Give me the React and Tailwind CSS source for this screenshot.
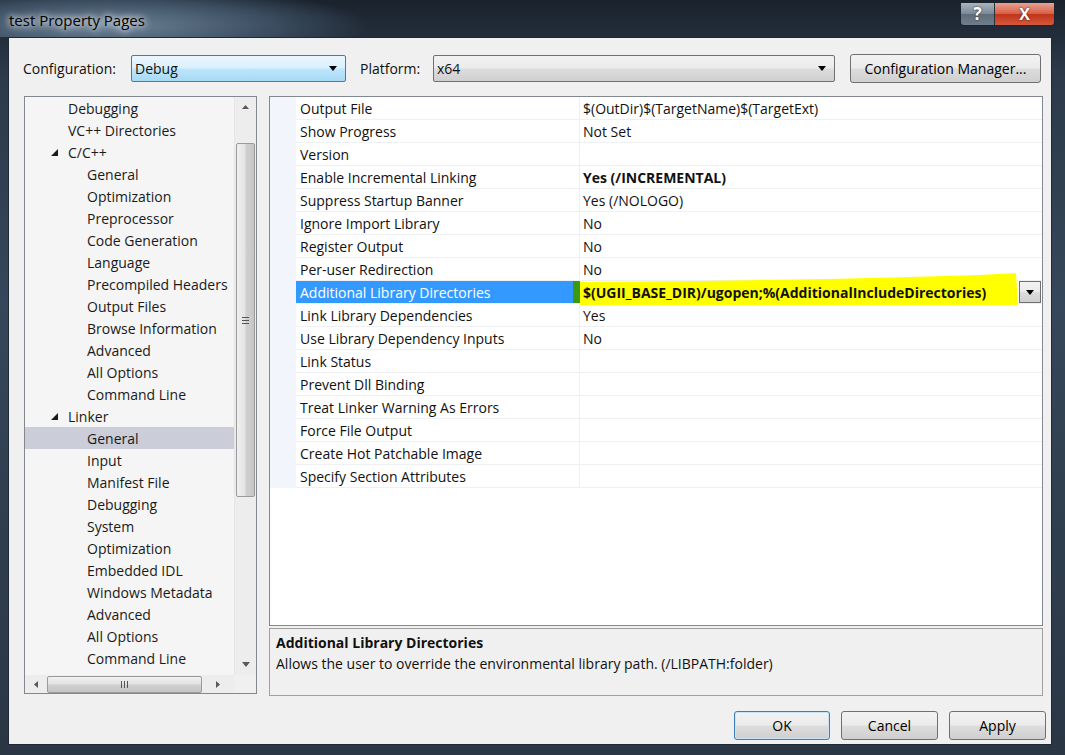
import React from 'react';

const treeItems = [
  { label: 'Debugging', level: 1 },
  { label: 'VC++ Directories', level: 1 },
  { label: 'C/C++', level: 1, open: true },
  { label: 'General', level: 2 },
  { label: 'Optimization', level: 2 },
  { label: 'Preprocessor', level: 2 },
  { label: 'Code Generation', level: 2 },
  { label: 'Language', level: 2 },
  { label: 'Precompiled Headers', level: 2 },
  { label: 'Output Files', level: 2 },
  { label: 'Browse Information', level: 2 },
  { label: 'Advanced', level: 2 },
  { label: 'All Options', level: 2 },
  { label: 'Command Line', level: 2 },
  { label: 'Linker', level: 1, open: true },
  { label: 'General', level: 2, selected: true },
  { label: 'Input', level: 2 },
  { label: 'Manifest File', level: 2 },
  { label: 'Debugging', level: 2 },
  { label: 'System', level: 2 },
  { label: 'Optimization', level: 2 },
  { label: 'Embedded IDL', level: 2 },
  { label: 'Windows Metadata', level: 2 },
  { label: 'Advanced', level: 2 },
  { label: 'All Options', level: 2 },
  { label: 'Command Line', level: 2 },
];

const props = [
  { name: 'Output File', value: '$(OutDir)$(TargetName)$(TargetExt)' },
  { name: 'Show Progress', value: 'Not Set' },
  { name: 'Version', value: '' },
  { name: 'Enable Incremental Linking', value: 'Yes (/INCREMENTAL)', bold: true },
  { name: 'Suppress Startup Banner', value: 'Yes (/NOLOGO)' },
  { name: 'Ignore Import Library', value: 'No' },
  { name: 'Register Output', value: 'No' },
  { name: 'Per-user Redirection', value: 'No' },
  { name: 'Additional Library Directories', value: '$(UGII_BASE_DIR)/ugopen;%(AdditionalIncludeDirectories)', selected: true },
  { name: 'Link Library Dependencies', value: 'Yes' },
  { name: 'Use Library Dependency Inputs', value: 'No' },
  { name: 'Link Status', value: '' },
  { name: 'Prevent Dll Binding', value: '' },
  { name: 'Treat Linker Warning As Errors', value: '' },
  { name: 'Force File Output', value: '' },
  { name: 'Create Hot Patchable Image', value: '' },
  { name: 'Specify Section Attributes', value: '' },
];

const DownArrow = ({ color = '#000' }) => (
  <svg width="8" height="5" viewBox="0 0 8 5">
    <polygon points="0,0 8,0 4,5" fill={color} />
  </svg>
);

const Expander = () => (
  <svg width="7" height="7" viewBox="0 0 7 7">
    <polygon points="7,0 7,7 0,7" fill="#1a1a1a" />
  </svg>
);

const TreeRow = ({ item }) => (
  <div
    className={`h-[22px] flex items-center shrink-0 ${item.selected ? 'bg-[#cbcdd9]' : ''}`}
  >
    {item.level === 1 ? (
      <>
        <div className="w-[43px] flex justify-end pr-[10px]">
          {item.open && <Expander />}
        </div>
        <span className="whitespace-nowrap">{item.label}</span>
      </>
    ) : (
      <>
        <div className="w-[62px]" />
        <span className="whitespace-nowrap">{item.label}</span>
      </>
    )}
  </div>
);

const btn =
  'h-[29px] flex items-center justify-center rounded-[3px] border text-[14px] text-black bg-[linear-gradient(180deg,#f2f2f2_0%,#ebebeb_49%,#dddddd_51%,#cfcfcf_100%)]';

export default function App() {
  return (
    <div className="w-[1065px] h-[755px] flex flex-col overflow-hidden bg-[linear-gradient(180deg,#1a222c_0%,#2c3a4a_10%,#35475a_40%,#2a3644_100%)] font-['Segoe_UI','Open_Sans',sans-serif] text-[14px] text-[#111]">
      {/* Title bar */}
      <div className="h-[37px] flex items-start shrink-0 relative bg-[radial-gradient(ellipse_260px_40px_at_110px_26px,#6d8297_0%,#3d5063_60%,transparent_100%)]">
        <div className="pl-[9px] pt-[9px] text-[15px] text-black [text-shadow:0_0_6px_#fff,0_0_10px_#e6eef5]">
          test Property Pages
        </div>
        <div className="ml-auto mr-[10px] mt-[3px] flex h-[23px] rounded-b-[4px] border border-[#1b2530] border-t-0 overflow-hidden">
          <div className="w-[34px] flex items-center justify-center bg-[linear-gradient(180deg,#a9b4bf_0%,#7a8896_50%,#5f6d7b_51%,#6f7e8c_100%)] border-r border-[#28323c] text-white text-[17px] font-bold [text-shadow:0_0_2px_#222]">
            ?
          </div>
          <div className="w-[59px] flex items-center justify-center bg-[linear-gradient(180deg,#e9a192_0%,#d65e44_50%,#c1331a_51%,#d5593c_100%)] text-white text-[16px] font-bold [text-shadow:0_0_2px_#400]">
            X
          </div>
        </div>
      </div>

      {/* Client area */}
      <div className="ml-[8px] w-[1044px] h-[708px] bg-[#f0f0f0] border border-[#1e2935] flex flex-col shrink-0">
        {/* Configuration row */}
        <div className="mt-[17px] h-[27px] flex items-center pl-[14px] shrink-0">
          <div className="w-[108px]">Configuration:</div>
          <div className="w-[215px] h-[27px] flex items-center border border-[#3c7fb1] rounded-[2px] bg-[linear-gradient(180deg,#eaf6fd_0%,#d9f0fc_49%,#bee6fd_51%,#a7d9f5_100%)] pl-[3px] pr-[8px]">
            <span className="flex-1">Debug</span>
            <DownArrow />
          </div>
          <div className="ml-[14px] w-[73px]">Platform:</div>
          <div className="w-[402px] h-[27px] flex items-center border border-[#707070] rounded-[2px] bg-[linear-gradient(180deg,#f2f2f2_0%,#ebebeb_49%,#dddddd_51%,#cfcfcf_100%)] pl-[3px] pr-[8px]">
            <span className="flex-1">x64</span>
            <DownArrow />
          </div>
          <div className={`${btn} ml-[15px] w-[191px] h-[27px] border-[#707070]`}>Configuration Manager...</div>
        </div>

        {/* Main panels */}
        <div className="mt-[14px] flex shrink-0">
          {/* Tree panel */}
          <div className="ml-[15px] w-[233px] h-[598px] border border-[#828790] flex flex-col bg-[#f5f5f5]">
            <div className="flex h-[578px]">
              <div className="w-[209px] flex flex-col overflow-hidden text-[#1a1a1a]">
                {treeItems.map((item, i) => (
                  <TreeRow key={i} item={item} />
                ))}
              </div>
              <div className="w-[22px] flex flex-col items-center bg-[#ededed] border-l border-[#e6e6e6]">
                <div className="h-[17px] flex items-center justify-center pt-[2px]">
                  <svg width="7" height="4" viewBox="0 0 7 4"><polygon points="0,4 7,4 3.5,0" fill="#5a5a5a" /></svg>
                </div>
                <div className="mt-[29px] w-[19px] h-[354px] rounded-[2px] border border-[#9a9a9a] bg-[linear-gradient(90deg,#f0f0f0_0%,#e4e4e4_45%,#cfcfcf_55%,#c6c6c6_100%)] flex items-center justify-center">
                  <div className="flex flex-col gap-[2px]">
                    <div className="w-[7px] h-px bg-[#555]" />
                    <div className="w-[7px] h-px bg-[#555]" />
                    <div className="w-[7px] h-px bg-[#555]" />
                  </div>
                </div>
                <div className="mt-auto h-[17px] flex items-center justify-center pb-[4px]">
                  <DownArrow color="#5a5a5a" />
                </div>
              </div>
            </div>
            <div className="h-[18px] flex items-center bg-[#ededed]">
              <div className="w-[22px] flex justify-center">
                <svg width="4" height="7" viewBox="0 0 4 7"><polygon points="4,0 4,7 0,3.5" fill="#5a5a5a" /></svg>
              </div>
              <div className="w-[155px] h-[17px] rounded-[2px] border border-[#9a9a9a] bg-[linear-gradient(180deg,#f0f0f0_0%,#e4e4e4_45%,#cfcfcf_55%,#c6c6c6_100%)] flex items-center justify-center gap-[2px]">
                <div className="w-px h-[7px] bg-[#555]" />
                <div className="w-px h-[7px] bg-[#555]" />
                <div className="w-px h-[7px] bg-[#555]" />
              </div>
              <div className="w-[32px] flex justify-center">
                <svg width="4" height="7" viewBox="0 0 4 7"><polygon points="0,0 0,7 4,3.5" fill="#5a5a5a" /></svg>
              </div>
              <div className="flex-1 h-full bg-[#f0f0f0]" />
            </div>
          </div>

          {/* Right column */}
          <div className="ml-[12px] w-[774px] flex flex-col">
            <div className="h-[530px] border border-[#828790] bg-white flex flex-col">
              {props.map((p, i) => (
                <div key={i} className="h-[23px] flex shrink-0">
                  <div className="w-[26px] bg-[#f2f6fc]" />
                  <div className="flex-1 flex border-b border-[#eef0f4]">
                    {p.selected ? (
                      <>
                        <div className="w-[277px] bg-[#3399ff] text-white flex items-center pl-[4px]">{p.name}</div>
                        <div className="w-[7px] bg-[#3a9a14]" />
                      </>
                    ) : (
                      <div className="w-[284px] flex items-center pl-[4px] border-r border-[#eef0f4]">{p.name}</div>
                    )}
                    <div className="flex-1 relative flex items-center pl-[3px]">
                      {p.selected && (
                        <svg className="absolute left-0 top-[-8px]" width="440" height="32" viewBox="0 0 440 32">
                          <polygon points="0,1 120,0 250,-2 330,-4 400,-6 436,-8 438,26 300,28 120,29 0,31" fill="#ffff00" transform="translate(0,8)" />
                        </svg>
                      )}
                      <span className={`relative whitespace-nowrap ${p.bold || p.selected ? 'font-bold' : ''}`}>{p.value}</span>
                      {p.selected && (
                        <div className="absolute right-[1px] top-0 w-[22px] h-[22px] border border-[#707070] bg-[linear-gradient(180deg,#f2f2f2_0%,#ebebeb_49%,#dddddd_51%,#cfcfcf_100%)] flex items-center justify-center">
                          <DownArrow />
                        </div>
                      )}
                    </div>
                  </div>
                </div>
              ))}
            </div>
            <div className="mt-[2px] h-[68px] border border-[#a0a0a0] bg-[#f0f0f0] pl-[6px] pt-[4px]">
              <div className="font-bold leading-[20px]">Additional Library Directories</div>
              <div className="leading-[22px]">Allows the user to override the environmental library path. (/LIBPATH:folder)</div>
            </div>
          </div>
        </div>

        {/* Buttons */}
        <div className="mt-[15px] flex justify-end pr-[5px]">
          <div className={`${btn} w-[96px] border-[#3c7fb1] shadow-[inset_0_0_0_1px_#cbe4f5]`}>OK</div>
          <div className={`${btn} ml-[11px] w-[97px] border-[#707070]`}>Cancel</div>
          <div className={`${btn} ml-[11px] w-[97px] border-[#707070]`}>Apply</div>
        </div>
      </div>
    </div>
  );
}
